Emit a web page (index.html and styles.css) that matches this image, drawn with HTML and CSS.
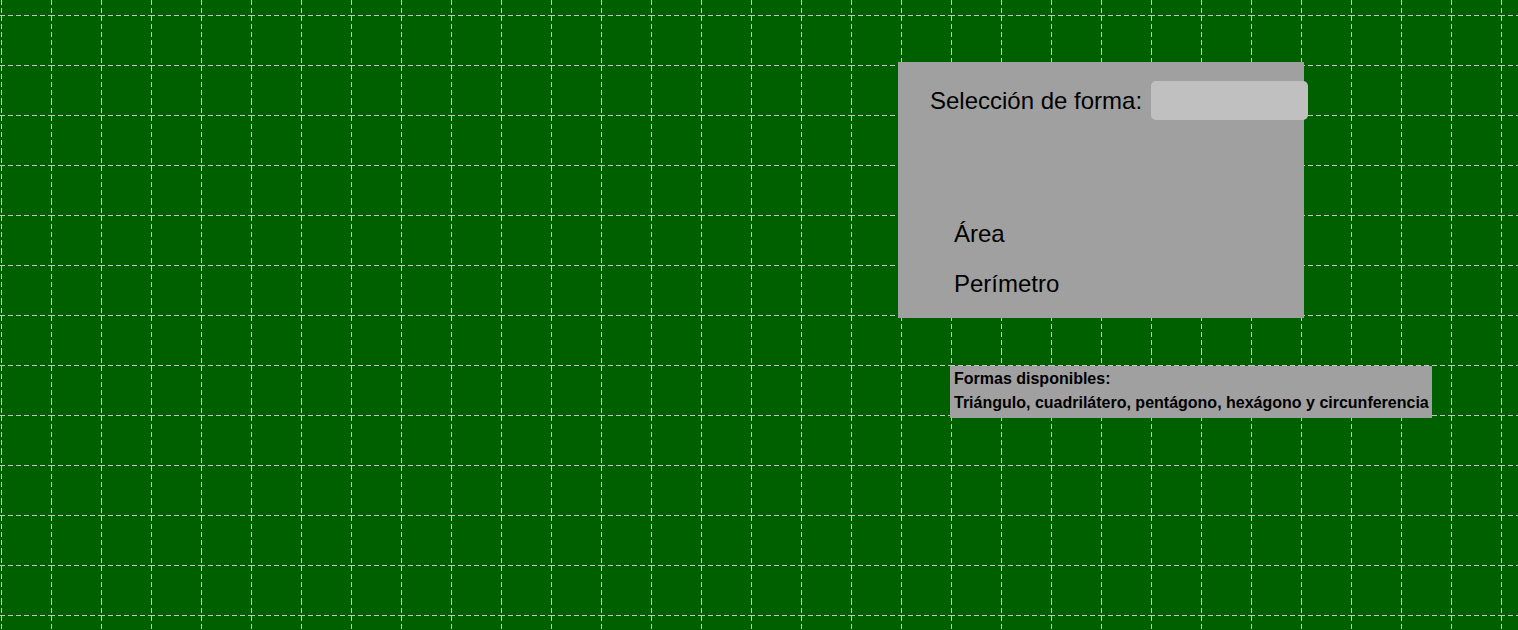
FILE: index.html
```html
<!DOCTYPE html>
<html lang="es">
<head>
<meta charset="utf-8">
<title>Formas</title>
<link rel="stylesheet" href="styles.css">
</head>
<body>
<svg class="grid-bg" aria-hidden="true">
  <defs>
    <pattern id="cell" patternUnits="userSpaceOnUse" width="50" height="50">
      <line x1="0" y1="15.5" x2="50" y2="15.5" class="gl"/>
      <line x1="1.5" y1="0" x2="1.5" y2="50" class="gl"/>
    </pattern>
  </defs>
  <rect width="100%" height="100%" fill="url(#cell)"/>
</svg>
<main class="wrap">
  <section class="panel">
    <div class="row">
      <label class="label" for="forma">Selección de forma:</label>
      <input class="field" id="forma" type="text">
    </div>
    <p class="item first">Área</p>
    <p class="item">Perímetro</p>
  </section>
  <aside class="info">
    <p>Formas disponibles:</p>
    <p>Triángulo, cuadrilátero, pentágono, hexágono y circunferencia</p>
  </aside>
</main>
</body>
</html>
```
FILE: styles.css
```css
html, body {
  margin: 0;
  padding: 0;
}
body {
  background: #006000;
  width: 1518px;
  height: 630px;
  overflow: hidden;
  font-family: "Liberation Sans", Arial, sans-serif;
  color: #000;
  position: relative;
}
.grid-bg {
  position: absolute;
  left: 0;
  top: 0;
  width: 1518px;
  height: 630px;
  z-index: 0;
}
.gl {
  stroke: #c4c4c4;
  stroke-width: 1;
  stroke-dasharray: 5 3;
}
.wrap {
  position: relative;
  z-index: 1;
  padding: 62px 0 0 898px;
  display: flex;
  flex-direction: column;
  align-items: flex-start;
}
.panel {
  width: 406px;
  height: 256px;
  background: #a0a0a0;
  box-sizing: border-box;
  padding: 19px 0 0 32px;
}
.row {
  display: flex;
  align-items: center;
  gap: 9px;
  height: 39px;
}
.label {
  font-size: 24px;
  white-space: nowrap;
}
.field {
  flex: none;
  width: 157px;
  height: 39px;
  box-sizing: border-box;
  border: none;
  border-radius: 5px;
  background: #c0c0c0;
  margin: 0;
  padding: 0;
  outline: none;
}
.item {
  margin: 0 0 0 24px;
  font-size: 24px;
  line-height: 50px;
}
.item.first {
  margin-top: 89px;
}
.info {
  margin: 48px 0 0 52px;
  background: #a0a0a0;
  padding: 1px 3px 3px 4px;
  font-weight: bold;
  font-size: 16px;
  white-space: nowrap;
}
.info p {
  margin: 0;
  line-height: 24px;
}
```
